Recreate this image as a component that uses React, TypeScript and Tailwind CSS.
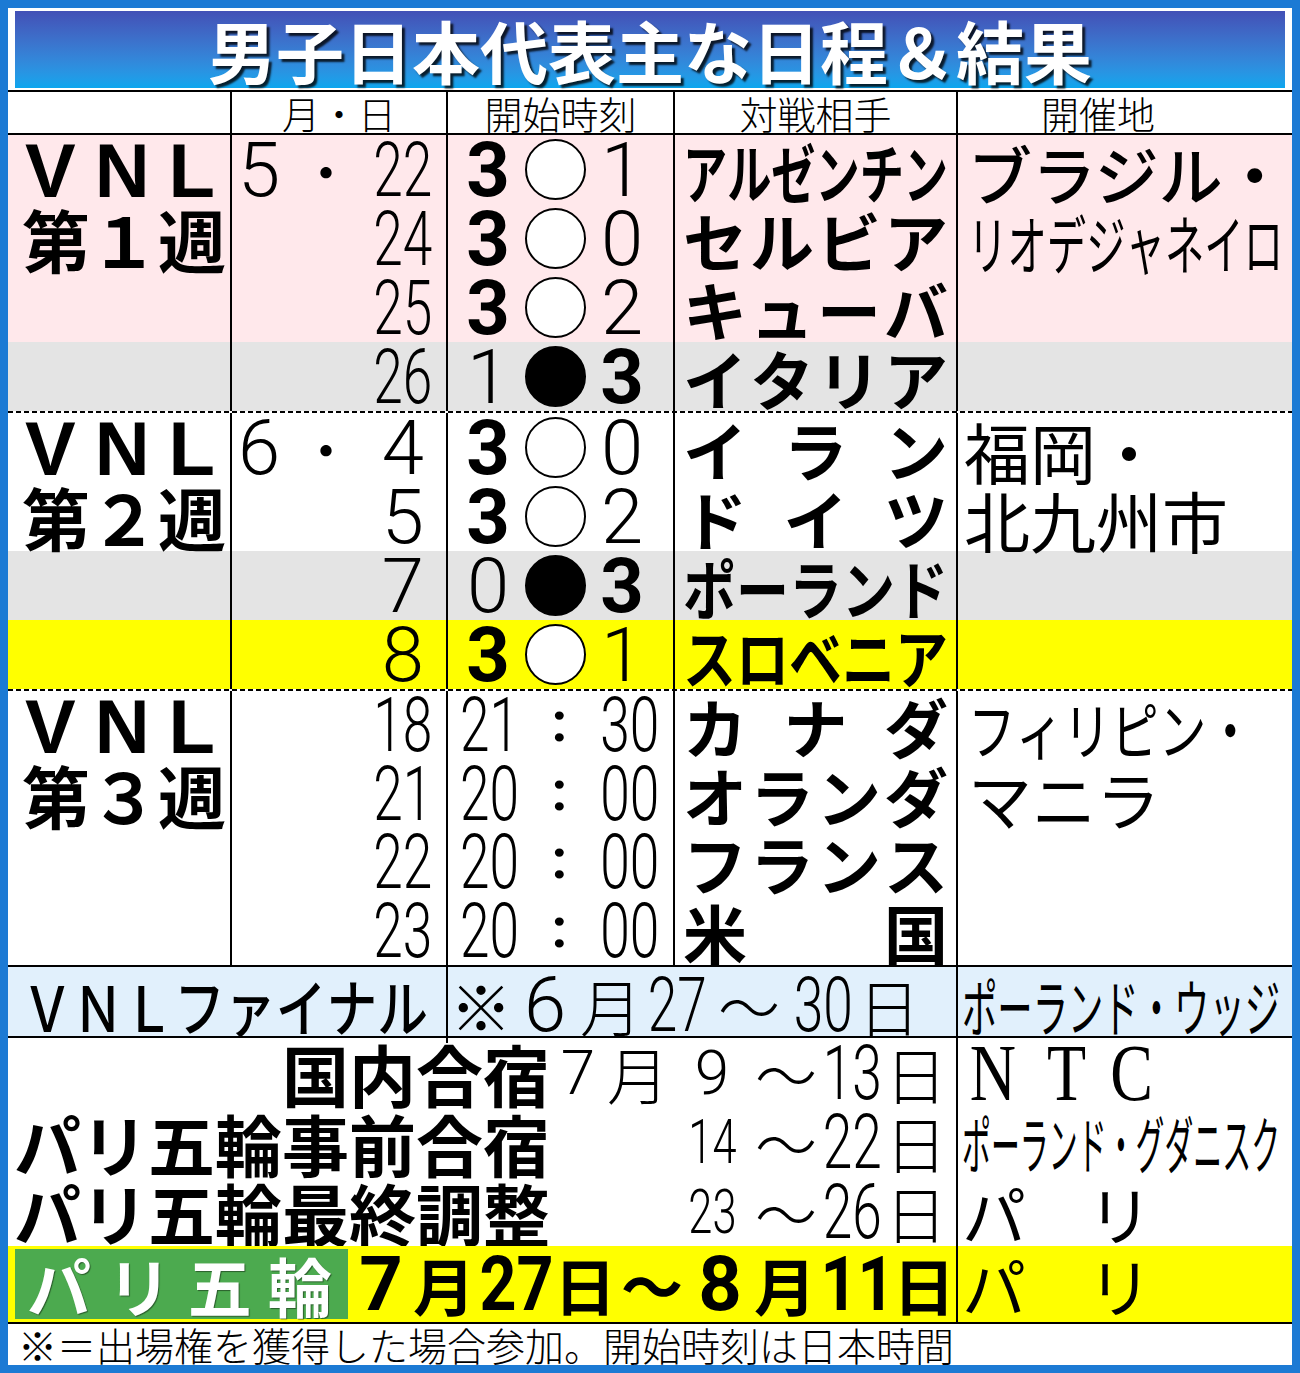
import React from 'react';

const jp = "font-['Noto_Sans_CJK_JP',sans-serif]";
const num = "font-['Roboto','Noto_Sans_CJK_JP',sans-serif]";
const lat = "font-['Liberation_Sans','Noto_Sans_CJK_JP',sans-serif]";
const serif = "font-['Liberation_Serif','Noto_Sans_CJK_JP',serif]";

const COLS = 'grid-cols-[222px_216px_227px_283px_336px]';
const ROW_START = ['row-start-1', 'row-start-2', 'row-start-3', 'row-start-4'];

const PINK = 'bg-[#ffe8eb]';
const GRAY = 'bg-[#e4e4e4]';
const YELLOW = 'bg-[#ffff00]';
const WHITE = 'bg-white';

type SpreadProps = { text: string; width: number; size: number; className?: string };

// stretches / squeezes a word to fill a fixed width, like the paper's justified type
const Spread = ({ text, width, size, className = '' }: SpreadProps) => {
  const chars = Array.from(text);
  const scale = Math.min(1, width / (chars.length * size));
  return (
    <div className={`shrink-0 leading-none ${className}`} style={{ width }}>
      <div
        className="flex origin-left justify-between whitespace-nowrap"
        style={{ width: width / scale, transform: `scaleX(${scale})` }}
      >
        {chars.map((c, i) => (
          <span key={i}>{c}</span>
        ))}
      </div>
    </div>
  );
};

const Cond = ({ children, origin = 'origin-center' }: { children: React.ReactNode; origin?: string }) => (
  <span className={`inline-block scale-x-[0.7] ${origin}`}>{children}</span>
);

const Box = ({ w, children, className = '' }: { w: string; children?: React.ReactNode; className?: string }) => (
  <span className={`flex shrink-0 justify-center ${w} ${className}`}>{children}</span>
);

const Dashed = () => <div className="h-[2px] bg-[repeating-linear-gradient(90deg,#000_0_5px,transparent_5px_8px)]" />;

const Score = ({ s }: { s: string }) => {
  const [l, mark, r] = Array.from(s);
  const digit = (d: string) => `w-[66px] shrink-0 text-center ${d === '3' ? 'font-bold' : 'font-light'}`;
  return (
    <div className={`flex h-full items-center border-l-2 border-black pl-[7px] text-[76px] leading-none ${num}`}>
      <span className={digit(l)}>{l}</span>
      <span
        className={`ml-[4px] h-[61px] w-[61px] shrink-0 rounded-full border-2 border-black ${
          mark === '○' ? 'bg-white' : 'bg-black'
        }`}
      />
      <span className={`ml-[3px] ${digit(r)}`}>{r}</span>
    </div>
  );
};

type Row = { day: string; score?: string; time?: [string, string]; opp: string; bg: string };
type WeekData = { no: string; month?: string; venue: React.ReactNode; rows: Row[]; rowsClass: string; dashed: boolean };

const weeks: WeekData[] = [
  {
    no: '１',
    month: '5',
    rowsClass: 'grid-rows-[repeat(4,69px)]',
    dashed: true,
    venue: (
      <>
        <div className="flex h-[69px] items-center pl-[10px] text-[64px] font-medium leading-none">ブラジル・</div>
        <div className="flex h-[69px] items-center pl-[10px]">
          <Spread text="リオデジャネイロ" width={315} size={64} className="text-[64px]" />
        </div>
      </>
    ),
    rows: [
      { day: '22', score: '3○1', opp: 'アルゼンチン', bg: PINK },
      { day: '24', score: '3○0', opp: 'セルビア', bg: PINK },
      { day: '25', score: '3○2', opp: 'キューバ', bg: PINK },
      { day: '26', score: '1●3', opp: 'イタリア', bg: GRAY },
    ],
  },
  {
    no: '２',
    month: '6',
    rowsClass: 'grid-rows-[repeat(4,69px)]',
    dashed: true,
    venue: (
      <>
        <div className="flex h-[69px] items-center pl-[6px] text-[66px] leading-none">福岡・</div>
        <div className="flex h-[69px] items-center pl-[6px] text-[66px] leading-none">北九州市</div>
      </>
    ),
    rows: [
      { day: '4', score: '3○0', opp: 'イラン', bg: WHITE },
      { day: '5', score: '3○2', opp: 'ドイツ', bg: WHITE },
      { day: '7', score: '0●3', opp: 'ポーランド', bg: GRAY },
      { day: '8', score: '3○1', opp: 'スロベニア', bg: YELLOW },
    ],
  },
  {
    no: '３',
    rowsClass: 'grid-rows-[repeat(4,68.5px)]',
    dashed: false,
    venue: (
      <>
        <div className="flex h-[69px] items-center pl-[10px]">
          <Spread text="フィリピン・" width={286} size={62} className="text-[62px]" />
        </div>
        <div className="flex h-[69px] items-center pl-[10px] text-[64px] leading-none">マニラ</div>
      </>
    ),
    rows: [
      { day: '18', time: ['21', '30'], opp: 'カナダ', bg: WHITE },
      { day: '21', time: ['20', '00'], opp: 'オランダ', bg: WHITE },
      { day: '22', time: ['20', '00'], opp: 'フランス', bg: WHITE },
      { day: '23', time: ['20', '00'], opp: '米国', bg: WHITE },
    ],
  },
];

const Week = ({ w }: { w: WeekData }) => (
  <>
    <div className={`grid ${COLS} ${w.rowsClass} ${jp}`}>
      {w.rows.map((r, i) => (
        <div key={`bg${i}`} className={`col-span-5 col-start-1 ${ROW_START[i]} ${r.bg}`} />
      ))}

      <div className="col-start-1 row-span-4 row-start-1 flex flex-col pt-[2px]">
        <div
          className={`ml-[17px] flex h-[68px] w-[190px] items-center justify-between text-[76px] font-bold leading-none ${lat}`}
        >
          <span>V</span>
          <span>N</span>
          <span>L</span>
        </div>
        <div className="ml-[14px] flex h-[68px] w-[200px] items-center justify-between text-[68px] font-bold leading-none">
          <span>第</span>
          <span>{w.no}</span>
          <span>週</span>
        </div>
      </div>

      {w.rows.map((r, i) => (
        <React.Fragment key={i}>
          <div
            className={`col-start-2 ${ROW_START[i]} flex items-center border-l-2 border-black pl-[6px] pr-[14px] text-[76px] font-light leading-none ${num}`}
          >
            {i === 0 && w.month && (
              <>
                <span className="w-[54px] shrink-0">{w.month}</span>
                <span className={`w-[68px] shrink-0 text-center text-[60px] ${jp}`}>・</span>
              </>
            )}
            <span className="ml-auto flex w-[62px] shrink-0 justify-end">
              {r.day.length === 2 ? (
                <Cond origin="origin-right">{r.day}</Cond>
              ) : (
                <span className="mr-[8px]">{r.day}</span>
              )}
            </span>
          </div>

          <div className={`col-start-3 ${ROW_START[i]}`}>
            {r.score ? (
              <Score s={r.score} />
            ) : (
              <div
                className={`flex h-full items-center justify-between border-l-2 border-black pl-[12px] pr-[14px] text-[76px] font-light leading-none ${num}`}
              >
                <Cond origin="origin-left">{r.time![0]}</Cond>
                <span className="-mt-[6px] text-[56px] font-bold">:</span>
                <Cond origin="origin-right">{r.time![1]}</Cond>
              </div>
            )}
          </div>

          <div className={`col-start-4 ${ROW_START[i]} flex items-center border-l-2 border-black pl-[8px] font-bold`}>
            <Spread text={r.opp} width={265} size={64} className="text-[64px]" />
          </div>
        </React.Fragment>
      ))}

      <div className="col-start-5 row-span-4 row-start-1 flex flex-col border-l-2 border-black pt-[2px]">{w.venue}</div>
    </div>
    {w.dashed && <Dashed />}
  </>
);

const Paris = () => (
  <div className="flex w-[190px] justify-between text-[64px] leading-none">
    <span>パ</span>
    <span>リ</span>
  </div>
);

const camps = [
  {
    label: '国内合宿',
    dates: (
      <>
        <Box w="w-[52px]" className={num}>7</Box>
        <Box w="w-[68px]">月</Box>
        <Box w="w-[80px]" className={num}>9</Box>
      </>
    ),
    from: '13',
    venue: (
      <div className={`flex items-center text-[80px] leading-none ${serif}`}>
        <Box w="w-[62px]">
          <span className="inline-block scale-x-[0.8]">N</span>
        </Box>
        <Box w="w-[84px]">
          <span className="inline-block scale-x-[0.8]">T</span>
        </Box>
        <Box w="w-[48px]">
          <span className="inline-block scale-x-[0.8]">C</span>
        </Box>
      </div>
    ),
  },
  {
    label: 'パリ五輪事前合宿',
    dates: (
      <Box w="w-[80px]" className={num}>
        <Cond>14</Cond>
      </Box>
    ),
    from: '22',
    venue: <Spread text="ポーランド・グダニスク" width={318} size={62} className="text-[62px]" />,
  },
  {
    label: 'パリ五輪最終調整',
    dates: (
      <Box w="w-[80px]" className={num}>
        <Cond>23</Cond>
      </Box>
    ),
    from: '26',
    venue: <Paris />,
  },
];

const CAMP_H = ['h-[69px]', 'h-[70px]', 'h-[69px]'];

export default function App() {
  return (
    <div className="h-[1373px] w-[1300px] bg-[#1c7ad4] p-[8px]">
      <div className="flex h-full flex-col bg-white text-black">
        {/* title */}
        <div className="px-[7px] pb-[2px] pt-[3px]">
          <div className="flex h-[77px] items-center justify-center bg-linear-to-b from-[#4250b6] to-[#0aa6ee]">
            <h1
              className={`text-[68px] font-bold leading-none text-white [text-shadow:3px_3px_2px_rgba(0,0,0,0.8)] ${jp}`}
            >
              男子日本代表主な日程＆結果
            </h1>
          </div>
        </div>

        {/* column heads */}
        <div className={`grid h-[45px] ${COLS} border-y-2 border-black text-[38px] font-light leading-none ${jp}`}>
          <div />
          <div className="flex items-center justify-center border-l-2 border-black">月・日</div>
          <div className="flex items-center justify-center border-l-2 border-black">開始時刻</div>
          <div className="flex items-center justify-center border-l-2 border-black">対戦相手</div>
          <div className="flex items-center justify-center border-l-2 border-black pr-[54px]">開催地</div>
        </div>

        {weeks.map((w) => (
          <Week key={w.no} w={w} />
        ))}

        {/* VNL final */}
        <div className={`grid h-[73px] grid-cols-[438px_510px_336px] border-y-2 border-black bg-[#e1f0fc] ${jp}`}>
          <div className="flex items-center pl-[14px] font-medium">
            <Spread text="ＶＮＬファイナル" width={406} size={62} className="text-[62px]" />
          </div>
          <div className="flex items-center border-l-2 border-black pl-[4px] text-[62px] font-light leading-none">
            <Box w="w-[58px]">※</Box>
            <Box w="w-[70px]" className={`text-[76px] ${num}`}>6</Box>
            <Box w="w-[62px]">月</Box>
            <Box w="w-[70px]" className={`text-[76px] ${num}`}>
              <Cond>27</Cond>
            </Box>
            <Box w="w-[74px]">〜</Box>
            <Box w="w-[74px]" className={`text-[76px] ${num}`}>
              <Cond>30</Cond>
            </Box>
            <Box w="w-[58px]">日</Box>
          </div>
          <div className="flex items-center border-l-2 border-black pl-[4px]">
            <Spread text="ポーランド・ウッジ" width={318} size={62} className="text-[62px]" />
          </div>
        </div>

        {/* camps */}
        <div className={`grid grid-cols-[948px_336px] ${jp}`}>
          {camps.map((c, i) => (
            <React.Fragment key={c.label}>
              <div className={`flex ${CAMP_H[i]} items-center`}>
                <div className="w-[542px] shrink-0 text-right text-[67px] font-bold leading-none">{c.label}</div>
                <div className="ml-auto flex items-center pr-[8px] text-[62px] font-light leading-none">
                  {c.dates}
                  <Box w="w-[68px]">〜</Box>
                  <Box w="w-[64px]" className={`text-[76px] ${num}`}>
                    <Cond>{c.from}</Cond>
                  </Box>
                  <Box w="w-[64px]">日</Box>
                </div>
              </div>
              <div className={`flex ${CAMP_H[i]} items-center border-l-2 border-black pl-[4px]`}>{c.venue}</div>
            </React.Fragment>
          ))}
        </div>

        {/* Paris Olympics */}
        <div className={`grid h-[78px] grid-cols-[948px_336px] border-b-2 border-black bg-[#ffff00] ${jp}`}>
          <div className="flex items-center pl-[7px]">
            <div className="flex h-[70px] w-[333px] shrink-0 items-center bg-[#4caa4f] pl-[12px]">
              <Spread
                text="パリ五輪"
                width={305}
                size={64}
                className="text-[64px] font-bold text-white [text-shadow:1px_1px_1px_rgba(0,0,0,0.45)]"
              />
            </div>
            <div className="ml-[4px] flex items-center text-[62px] font-bold leading-none">
              <Box w="w-[58px]" className={`text-[76px] ${num}`}>7</Box>
              <Box w="w-[68px]">月</Box>
              <Box w="w-[78px]" className={`text-[76px] ${num}`}>
                <span className="inline-block scale-x-[0.85]">27</span>
              </Box>
              <Box w="w-[58px]">日</Box>
              <Box w="w-[76px]">〜</Box>
              <Box w="w-[60px]" className={`text-[76px] ${num}`}>8</Box>
              <Box w="w-[70px]">月</Box>
              <Box w="w-[76px]" className={`text-[76px] ${num}`}>
                <span className="inline-block scale-x-[0.85]">11</span>
              </Box>
              <Box w="w-[56px]">日</Box>
            </div>
          </div>
          <div className="flex items-center border-l-2 border-black pl-[4px]">
            <Paris />
          </div>
        </div>

        {/* note */}
        <div className={`flex h-[41px] items-center pl-[10px] text-[39px] font-light leading-none ${jp}`}>
          ※＝出場権を獲得した場合参加。開始時刻は日本時間
        </div>
      </div>
    </div>
  );
}
